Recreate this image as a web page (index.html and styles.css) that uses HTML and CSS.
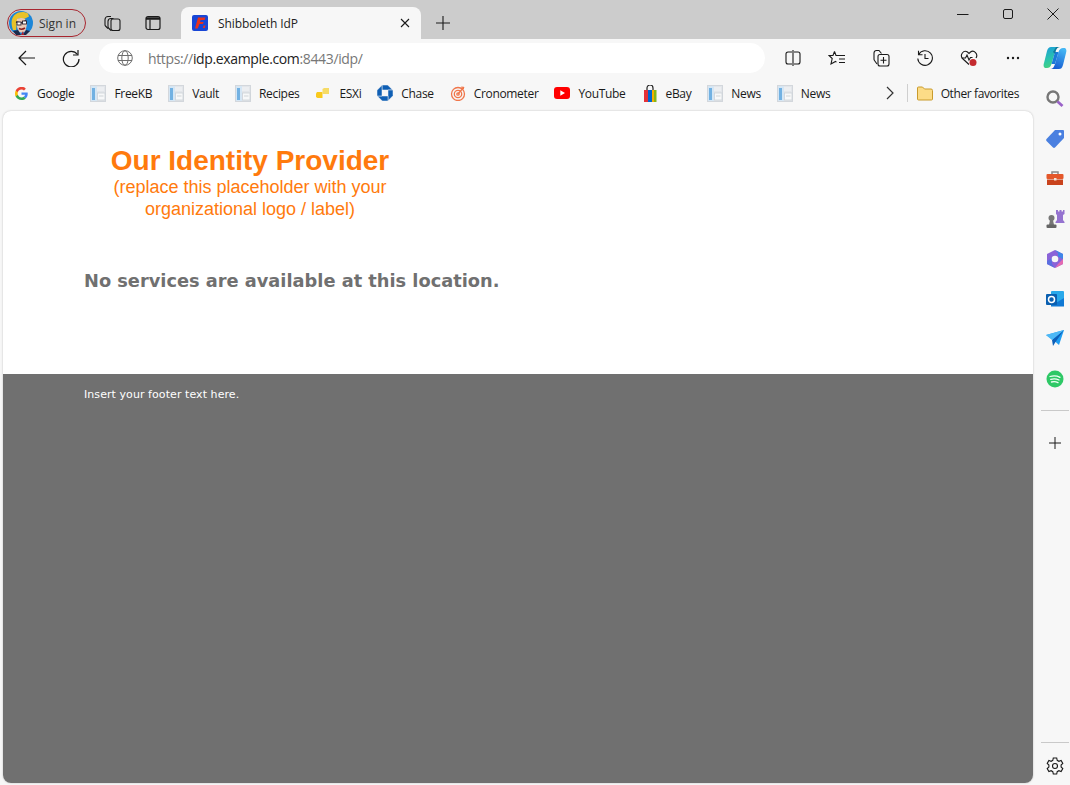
FILE: index.html
```html
<!DOCTYPE html>
<html lang="en">
<head>
<meta charset="utf-8">
<title>Shibboleth IdP</title>
<link rel="stylesheet" href="styles.css">
</head>
<body>
<svg class="defs" width="0" height="0" aria-hidden="true">
  <symbol id="doc" viewBox="0 0 16 17">
    <rect x="0" y="0" width="16" height="17" fill="#e3e6ea"/>
    <rect x="0.5" y="0.5" width="15" height="16" fill="none" stroke="#d3d7dc"/>
    <rect x="1" y="1" width="6" height="15" fill="#d5e6f4"/>
    <rect x="2" y="3" width="3" height="12" fill="#72b1e2"/>
    <rect x="7" y="2" width="7" height="4" fill="#eceef1"/>
    <rect x="7.500" y="8" width="7.500" height="7" fill="#f7f8f9" stroke="#ced2d8" stroke-width="0.800"/>
    <rect x="9" y="10.500" width="4.500" height="1" fill="#cfd3d8"/>
  </symbol>
</svg>

<header class="tabstrip">
  <div class="signin">
    <svg class="avatar" viewBox="0 0 24 24" width="24" height="24">
      <circle cx="12" cy="12" r="12" fill="#1b86d8"/>
      <path d="M4 19C2 13 2 8 5 4.500 9 .5 15 0 19 2.500l1 3-5 2.500-5-1-2 3-1 9z" fill="#e8c22a"/>
      <path d="M8 8c3-1.500 6-1.500 8 0l2 5-1.500 7c-2.500 2-5 2-7 0-1.500-3-2.500-8-1.500-12z" fill="#e9c9b6"/>
      <path d="M7 11l5 1 5-2.500" fill="none" stroke="#2b2230" stroke-width="1.300"/>
      <rect x="8" y="11" width="4" height="3" fill="#fff" stroke="#2b2230" stroke-width="0.900"/>
      <rect x="13.500" y="10" width="4" height="3" fill="#fff" stroke="#2b2230" stroke-width="0.900"/>
      <path d="M10 17.500c2 1.200 4 .8 6-.5" stroke="#8a2020" stroke-width="1.500" fill="none"/>
      <path d="M4 20l5-1 3 5H7zM17 19l4 1-4 4h-3z" fill="#1d2a4a"/>
      <path d="M12 24l2-4 1 4z" fill="#b3202a"/>
    </svg>
    <span class="signin-text">Sign in</span>
  </div>
  <button class="strip-btn workspaces" aria-label="Workspaces">
    <svg viewBox="0 0 18 18" width="18" height="18" fill="none" stroke="#1a1a1a" stroke-width="1.100">
      <path d="M5 14.500 2.500 12a2 2 0 0 1-.5-1.300V5.500A3 3 0 0 1 5 2.500h3"/>
      <path d="M8 16.500 5.500 14a2 2 0 0 1-.5-1.400V7.500a3 3 0 0 1 3-3h2.500"/>
      <rect x="8" y="5" width="9" height="11.500" rx="2"/>
    </svg>
  </button>
  <button class="strip-btn verttabs" aria-label="Vertical tabs">
    <svg viewBox="0 0 16 16" width="16" height="16" fill="none" stroke="#1a1a1a" stroke-width="1.200">
      <rect x="1" y="1.500" width="14" height="13" rx="2"/>
      <path d="M1 3.500h14" stroke-width="2.500"/>
      <path d="M5 4.500v10"/>
    </svg>
  </button>
  <div class="tab">
    <svg class="favicon" viewBox="0 0 16 16" width="16" height="16">
      <rect width="16" height="16" rx="2" fill="#1846d6"/>
      <path d="M6 2.500h7.500l-.9 2.500H8.600L8 7h3.700l-.8 2H7.400L5.800 13.500H3z" fill="#e8321c"/>
      <path d="M11.500 10.500h2l-.6 2.500h-2z" fill="#e8321c"/>
    </svg>
    <span class="tab-title">Shibboleth IdP</span>
    <svg class="tab-close" viewBox="0 0 10 10" width="10" height="10" stroke="#1a1a1a" stroke-width="1.100"><path d="M1 1l8 8M9 1l-8 8"/></svg>
  </div>
  <button class="strip-btn newtab" aria-label="New tab">
    <svg viewBox="0 0 14 14" width="14" height="14" stroke="#1a1a1a" stroke-width="1.100"><path d="M7 0v14M0 7h14"/></svg>
  </button>
  <div class="winctl">
    <svg viewBox="0 0 12 12" width="12" height="12" stroke="#1a1a1a"><path d="M0 6.500h11.500"/></svg>
    <svg viewBox="0 0 12 12" width="12" height="12" fill="none" stroke="#1a1a1a"><rect x="1.500" y="1.500" width="9" height="9" rx="1.500"/></svg>
    <svg viewBox="0 0 12 12" width="12" height="12" stroke="#1a1a1a"><path d="M.5.500l11 11M11.500.500l-11 11"/></svg>
  </div>
</header>

<nav class="toolbar">
  <svg class="tool-back" viewBox="0 0 18 16" width="18" height="16" fill="none" stroke="#1a1a1a" stroke-width="1.200"><path d="M8 1 1 8l7 7M1 8h16"/></svg>
  <svg class="tool-reload" viewBox="0 0 18 18" width="18" height="18" fill="none" stroke="#1a1a1a" stroke-width="1.200"><path d="M15.500 5.500A7.800 7.800 0 1 0 17 10"/><path d="M16 1v5h-5"/></svg>
  <div class="address">
    <svg class="globe" viewBox="0 0 16 16" width="16" height="16" fill="none" stroke="#6f6f6f" stroke-width="1"><circle cx="8" cy="8" r="7.300"/><ellipse cx="8" cy="8" rx="3.200" ry="7.300"/><path d="M1 5.500h14M1 10.500h14"/></svg>
    <span class="url"><span class="url-dim">https://</span>idp.example.com<span class="url-dim">:8443/idp/</span></span>
  </div>
  <div class="tool-icons">
    <svg viewBox="0 0 16 16" width="16" height="16" fill="none" stroke="#1a1a1a" stroke-width="1.100"><path d="M7 2H3a2 2 0 0 0-2 2v8a2 2 0 0 0 2 2h4M9 2h4a2 2 0 0 1 2 2v8a2 2 0 0 1-2 2H9M8 0v16"/></svg>
    <svg viewBox="0 0 18 16" width="18" height="16" fill="none" stroke="#1a1a1a" stroke-width="1.100"><path d="M6.500 1.500 8 5.500h3M6.500 1.500 5 5.500H1l3.200 3L3 14l4.500-2.500 1 .6M11 5.500h6M11 9h6M11 12.500h6"/></svg>
    <svg viewBox="0 0 18 18" width="18" height="18" fill="none" stroke="#1a1a1a" stroke-width="1.100"><path d="M5 15 2.500 11.500A2 2 0 0 1 2 10V4a2.500 2.500 0 0 1 2.500-2.500H7L9.500 4.500"/><rect x="6" y="5.500" width="11" height="11.500" rx="2"/><path d="M11.500 8v6.500M8.500 11.200h6"/></svg>
    <svg viewBox="0 0 16 16" width="16" height="16" fill="none" stroke="#1a1a1a" stroke-width="1.100"><path d="M1.700 4.500A7.300 7.300 0 1 1 .8 8.500M1.500 .8v4h4"/><path d="M8 4v4.500h3.500"/></svg>
    <svg viewBox="0 0 18 17" width="18" height="17" fill="none" stroke="#1a1a1a" stroke-width="1.100"><path d="M9 14.500 2.500 8.500C-.5 5 3.500-.5 7.500 2L9 3.500l1.500-1.500c3.500-2.500 8 2 5.500 6"/><path d="M1.500 8h4l1.500-3 2 5 1.500-2.500h2"/><circle cx="13" cy="12.500" r="3.500" fill="#c42b2f" stroke="none"/></svg>
    <svg viewBox="0 0 14 4" width="14" height="4" fill="#1a1a1a"><circle cx="2" cy="2" r="1.200"/><circle cx="7" cy="2" r="1.200"/><circle cx="12" cy="2" r="1.200"/></svg>
  </div>
  <svg class="copilot" viewBox="0 0 24 24" width="24" height="24">
    <defs>
      <linearGradient id="cpa" x1="0.200" y1="0" x2="0.500" y2="1"><stop offset="0" stop-color="#1c9fd8"/><stop offset="0.600" stop-color="#2cc6a8"/><stop offset="1" stop-color="#49d27a"/></linearGradient>
      <linearGradient id="cpb" x1="0.700" y1="0" x2="0.300" y2="1"><stop offset="0" stop-color="#46b8f5"/><stop offset="1" stop-color="#1558d0"/></linearGradient>
    </defs>
    <path d="M8 1h9c-3 0-4 2-5 5L8.500 18c-1 3-2.500 4-4.500 4H3c-2 0-3-2-2-5l3-12C5 2 6 1 8 1z" fill="url(#cpa)"/>
    <path d="M16 23H7c3 0 4-2 5-5l3.500-12c1-3 2.500-4 4.500-4h1c2 0 3 2 2 5l-3 12c-1 3-2 4-4 4z" fill="url(#cpb)"/>
    <path d="M12 6 15.500 6 12 18 8.500 18z" fill="#1b7ad8"/>
    <path d="M13 1h4c-2 0-3 1-4 3l-1 4-2-2z" fill="#137a9e"/>
  </svg>
</nav>

<div class="main">
  <div class="main-left">
    <nav class="bookmarks">
      <a class="bm">
        <svg class="bm-google" viewBox="0 0 24 24" width="13" height="13"><path d="M23.500 12.300c0-.9-.1-1.500-.2-2.300H12v4.500h6.500c-.3 1.500-1.200 2.900-2.500 3.700l3.800 3c2.300-2.100 3.700-5.200 3.700-8.900z" fill="#4285f4"/><path d="M12 24c3.200 0 6-1.100 7.900-2.900l-3.800-3c-1.100.7-2.400 1.200-4.100 1.200-3.100 0-5.800-2.100-6.700-5H1.300v3.100C3.300 21.300 7.300 24 12 24z" fill="#34a853"/><path d="M5.300 14.300c-.5-1.500-.5-3.100 0-4.600V6.600h-4a12 12 0 0 0 0 10.800z" fill="#fbbc05"/><path d="M12 4.700c1.800 0 3.300.6 4.600 1.800l3.400-3.400A11.500 11.500 0 0 0 1.300 6.600l4 3.100c.9-2.900 3.600-5 6.700-5z" fill="#ea4335"/></svg>
        <span>Google</span>
      </a>
      <a class="bm"><svg class="bm-icon" width="16" height="17"><use href="#doc"/></svg><span>FreeKB</span></a>
      <a class="bm"><svg class="bm-icon" width="16" height="17"><use href="#doc"/></svg><span>Vault</span></a>
      <a class="bm"><svg class="bm-icon" width="16" height="17"><use href="#doc"/></svg><span>Recipes</span></a>
      <a class="bm">
        <svg class="bm-icon" viewBox="0 0 16 16" width="16" height="16"><path d="M1 8.500 2 7h5.500v6H2.500L1 12z" fill="#f9c91c"/><path d="M7.500 4 9 3h5v6H7.500z" fill="#f6db66"/></svg>
        <span>ESXi</span>
      </a>
      <a class="bm">
        <svg class="bm-icon" viewBox="0 0 16 16" width="16" height="16" fill="#0f5fb4" stroke="#f7f7f7" stroke-width="0.500"><path d="M5 0H10.700L15.700 5H5z"/><path d="M16 5V10.700L11 15.700V5z"/><path d="M11 16H5.300L.3 11H11z"/><path d="M0 11V5.300L5 .3V11z"/></svg>
        <span>Chase</span>
      </a>
      <a class="bm">
        <svg class="bm-icon" viewBox="0 0 16 16" width="16" height="16" fill="none" stroke="#f0764a" stroke-width="1.300"><circle cx="8" cy="9" r="6.500"/><circle cx="8" cy="9" r="3.700"/><circle cx="8" cy="9" r="1.200"/><path d="M8 9l6-7M12 1.500v2h2"/></svg>
        <span>Cronometer</span>
      </a>
      <a class="bm">
        <svg class="bm-icon" viewBox="0 0 16 12" width="16" height="12"><rect width="16" height="12" rx="3" fill="#f00"/><path d="M6.300 3.300 11 6l-4.700 2.700z" fill="#fff"/></svg>
        <span>YouTube</span>
      </a>
      <a class="bm">
        <svg class="bm-icon" viewBox="0 0 16 17" width="16" height="17"><path d="M5 5V3a3 3 0 0 1 6 0v2" fill="none" stroke="#222" stroke-width="1.200"/><rect x="2" y="5" width="4" height="12" fill="#e53238"/><rect x="6" y="5" width="4" height="12" fill="#0064d2"/><rect x="10" y="5" width="2" height="12" fill="#f5af02"/><rect x="12" y="5" width="2.500" height="12" fill="#86b817"/></svg>
        <span>eBay</span>
      </a>
      <a class="bm"><svg class="bm-icon" width="16" height="17"><use href="#doc"/></svg><span>News</span></a>
      <a class="bm"><svg class="bm-icon" width="16" height="17"><use href="#doc"/></svg><span>News</span></a>
      <svg class="bm-more" viewBox="0 0 8 14" width="8" height="14" fill="none" stroke="#333" stroke-width="1.200"><path d="M1 1l6 6-6 6"/></svg>
      <span class="bm-sep"></span>
      <a class="bm bm-other">
        <svg class="bm-icon" viewBox="0 0 16 15" width="16" height="15"><path d="M.5 13V2a1 1 0 0 1 1-1h4l2 2h6.500a1.500 1.500 0 0 1 1.500 1.500V13a1 1 0 0 1-1 1H1.500a1 1 0 0 1-1-1z" fill="#fcdc87" stroke="#c99b2c"/></svg>
        <span>Other favorites</span>
      </a>
    </nav>
    <main class="page">
      <section class="content">
        <div class="logo">
          <div class="logo-title">Our Identity Provider</div>
          <div class="logo-sub">(replace this placeholder with your organizational logo / label)</div>
        </div>
        <p class="message">No services are available at this location.</p>
      </section>
      <footer class="footer">Insert your footer text here.</footer>
    </main>
  </div>
  <aside class="sidebar">
    <svg viewBox="0 0 20 20" width="20" height="20" fill="none"><circle cx="8" cy="8" r="5.500" stroke="#777" stroke-width="2.400"/><path d="M12.500 12.500l5 4.500" stroke="#9a62c8" stroke-width="2.800"/></svg>
    <svg viewBox="0 0 20 20" width="20" height="20"><path d="M10 1h8a1 1 0 0 1 1 1v7l-9 9.500a1.500 1.500 0 0 1-2 0l-6.500-6.500a1.500 1.500 0 0 1 0-2z" fill="#4a80e0"/><circle cx="15" cy="5" r="1.500" fill="#fff"/></svg>
    <svg viewBox="0 0 20 20" width="20" height="20"><path d="M7 5V3h6v2" fill="none" stroke="#888" stroke-width="1.500"/><rect x="1.500" y="5" width="17" height="5" rx="1" fill="#e4572a"/><rect x="2" y="10.500" width="16" height="5.500" fill="#c9431d"/><rect x="9" y="9" width="2.500" height="2.500" fill="#f3e4d7"/></svg>
    <svg viewBox="0 0 20 20" width="20" height="20"><circle cx="6.500" cy="9" r="3" fill="#777"/><path d="M5 11h3l1 5H4z" fill="#777"/><rect x="1.500" y="15.500" width="10" height="3.500" rx="1" fill="#666"/><path d="M11 1h2v1.500h1.500V1h2v1.500H18V1h1.500v4l-1.500 1v5l1.500 2v1H10.500v-1L12 11V6l-1-1z" fill="#9573d0"/></svg>
    <svg viewBox="0 0 20 20" width="20" height="20"><path d="M10 1 18 5v10l-8 4-8-4V5z" fill="#8a63d8"/><path d="M10 1 18 5v5l-5-2.500V4z" fill="#3f86e8"/><path d="M2 12l5-3 0 6 3 4-8-4z" fill="#5b6fe0"/><path d="M18 10v5l-8 4 3-4z" fill="#e46ab0"/><circle cx="10" cy="10" r="3.300" fill="#f7f7f7"/></svg>
    <svg viewBox="0 0 20 20" width="20" height="20"><rect x="6" y="2" width="13" height="15" rx="1" fill="#28a8ea"/><path d="M6 9l6.500 4L19 9v8.500H6z" fill="#0f78d4"/><rect x="1" y="5" width="11" height="11" rx="1" fill="#0a5fb0"/><circle cx="6.500" cy="10.500" r="3" fill="none" stroke="#fff" stroke-width="1.500"/></svg>
    <svg viewBox="0 0 20 20" width="20" height="20"><path d="M1 6 19 1 14 16 9.500 12z" fill="#1e9df2"/><path d="M19 1 7 11l1 6 2.500-4z" fill="#0d5fb8"/><path d="M7 11 1 6l18-5z" fill="#4db8f5"/></svg>
    <svg viewBox="0 0 20 20" width="20" height="20"><circle cx="10" cy="10" r="8.500" fill="#2ec866"/><path d="M5 7.500c3.500-1 7-.7 10 .8M5.700 10.300c3-.8 5.800-.6 8.300.7M6.500 13c2.300-.6 4.500-.4 6.500.6" fill="none" stroke="#f2fff6" stroke-width="1.300" stroke-linecap="round"/></svg>
    <span class="side-rule"></span>
    <svg class="side-plus" viewBox="0 0 12 12" width="12" height="12" stroke="#1a1a1a"><path d="M6 0v12M0 6h12"/></svg>
    <span class="side-rule side-rule-bottom"></span>
    <svg class="side-gear" viewBox="0 0 18 18" width="18" height="18" fill="none" stroke="#1a1a1a" stroke-width="1.100"><circle cx="9" cy="9" r="2.500"/><path d="M7.300 1h3.400l.5 2.300 1.700 1 2.200-.8 1.700 3-1.700 1.500v2l1.700 1.500-1.700 3-2.200-.8-1.700 1-.5 2.300H7.300l-.5-2.300-1.700-1-2.200.8-1.700-3L2.900 10V8L1.200 6.500l1.700-3 2.200.8 1.700-1z"/></svg>
  </aside>
</div>
</body>
</html>
```

FILE: styles.css
```css
* { box-sizing: border-box; }

html, body { height: 100%; margin: 0; }

body {
  display: flex;
  flex-direction: column;
  background: #f7f7f7;
  font-family: "Open Sans", "Noto Sans", sans-serif;
  font-size: 12px;
  color: #1a1a1a;
  overflow: hidden;
}

.defs { position: absolute; }

svg { flex: none; display: block; }

.tabstrip {
  display: flex;
  align-items: center;
  height: 39px;
  flex: none;
  background: #cccccc;
  padding-left: 7px;
}

.signin {
  display: flex;
  align-items: center;
  gap: 6px;
  width: 79px;
  height: 28px;
  margin-top: 7px;
  padding-left: 1px;
  border: 1px solid #a8262f;
  border-radius: 14px;
}

.signin-text { color: #333; }

.strip-btn {
  display: flex;
  align-items: center;
  justify-content: center;
  width: 32px;
  height: 28px;
  margin-top: 7px;
  padding: 0;
  border: 0;
  background: none;
}

.workspaces { margin-left: 10px; }
.verttabs { margin-left: 9px; }
.newtab { margin-left: 6px; }

.tab {
  display: flex;
  align-items: center;
  align-self: flex-end;
  width: 240px;
  height: 32px;
  margin-left: 12px;
  padding: 0 11px;
  background: #f7f7f7;
  border-radius: 8px 8px 0 0;
}

.tab-title { margin-left: 10px; letter-spacing: -0.1px; color: #222; }
.tab-close { margin-left: auto; }

.winctl {
  display: flex;
  align-items: center;
  gap: 33px;
  margin-left: auto;
  margin-right: 11px;
  margin-bottom: 11px;
}

.toolbar {
  display: flex;
  align-items: center;
  flex: none;
  height: 38px;
  padding-left: 18px;
}

.tool-reload { margin-left: 26px; }

.address {
  display: flex;
  align-items: center;
  width: 666px;
  height: 30px;
  margin-left: 19px;
  padding-left: 18px;
  background: #fff;
  border-radius: 15px;
}

.url {
  margin-left: 15px;
  font-size: 14px;
  letter-spacing: -0.36px;
  color: #222;
}

.url-dim { color: #777; }

.tool-icons {
  display: grid;
  grid-auto-flow: column;
  grid-auto-columns: 44px;
  justify-items: center;
  align-items: center;
  margin-left: 6px;
}

.copilot { margin-left: 8px; }

.main {
  display: flex;
  flex: 1;
  min-height: 0;
}

.main-left {
  display: flex;
  flex-direction: column;
  flex: 1;
  min-width: 0;
}

.bookmarks {
  display: flex;
  align-items: center;
  flex: none;
  height: 32px;
  margin-bottom: 2px;
  padding-left: 15px;
  gap: 16px;
}

.bm { display: flex; align-items: center; gap: 8px; letter-spacing: -0.33px; color: #1a1a1a; }
.bm-google { margin-right: 1px; }
.bm-more { margin-left: auto; margin-right: -1px; }
.bm-sep { width: 1px; height: 18px; margin-left: -2px; background: #cfcfcf; }
.bm-other { margin-left: -7px; margin-right: 14px; letter-spacing: -0.4px; }

.page {
  display: flex;
  flex-direction: column;
  flex: 1;
  margin: 0 0 2px 3px;
  border-radius: 8px;
  overflow: hidden;
  background: #fff;
  box-shadow: 0 0 2px rgba(0, 0, 0, 0.25);
}

.content {
  height: 263px;
  flex: none;
  padding: 34px 0 0 81px;
}

.logo {
  width: 332px;
  text-align: center;
  font-family: "Liberation Sans", Arial, sans-serif;
  color: #ff7a0d;
}

.logo-title {
  font-size: 28px;
  font-weight: bold;
  line-height: 31px;
}

.logo-sub {
  font-size: 18px;
  line-height: 22px;
  padding: 0 20px;
}

.message {
  margin: 50px 0 0;
  font-family: "DejaVu Sans", Verdana, sans-serif;
  font-size: 17.8px;
  font-weight: bold;
  color: #707070;
}

.footer {
  flex: 1;
  padding: 14px 0 0 81px;
  background: #707070;
  color: #fff;
  font-family: "DejaVu Sans", Verdana, sans-serif;
  font-size: 11px;
  letter-spacing: 0.07px;
}

.sidebar {
  display: flex;
  flex-direction: column;
  align-items: center;
  flex: none;
  width: 37px;
  padding: 12px 0 10px 7px;
  gap: 20px;
}

.side-rule {
  width: 28px;
  height: 1px;
  margin-top: 1px;
  background: #c9c9c9;
  flex: none;
}

.side-plus { margin-top: 6px; }
.side-rule-bottom { margin-top: auto; }
.side-gear { margin-top: -6px; }
```
